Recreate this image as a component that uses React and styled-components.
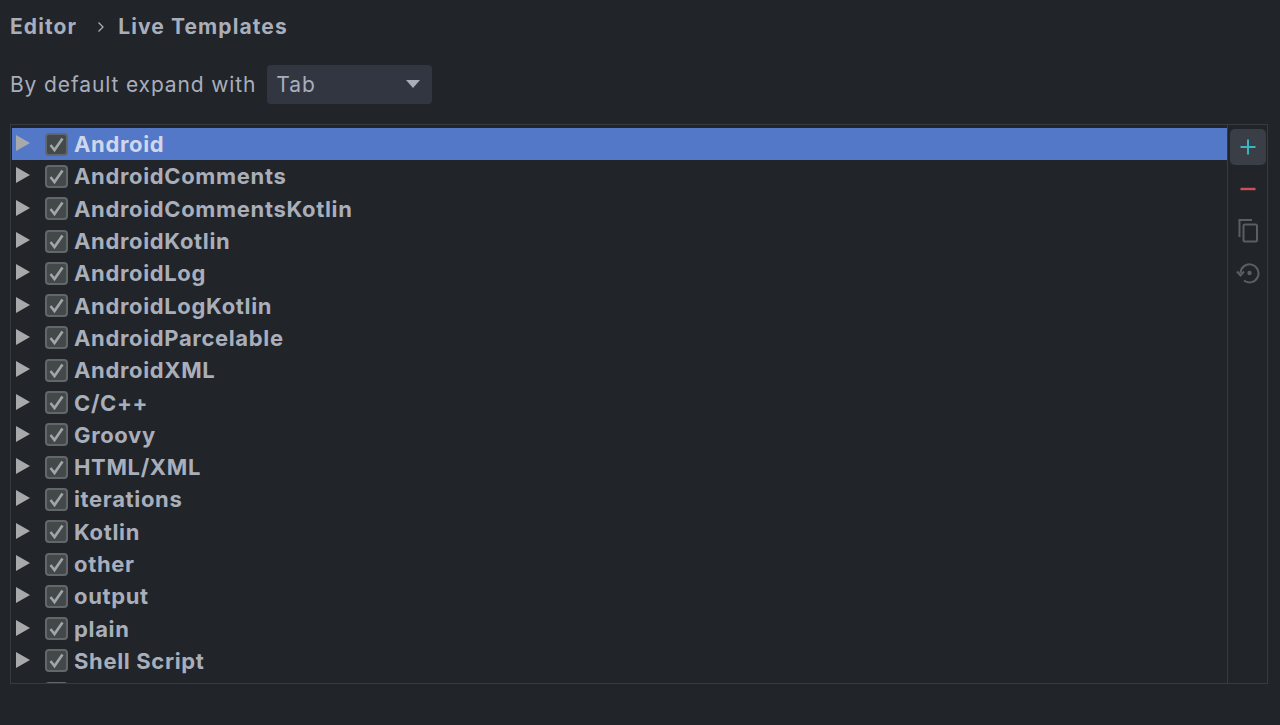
import React from 'react';
import styled, { createGlobalStyle } from 'styled-components';

const GlobalStyle = createGlobalStyle`
  html, body {
    margin: 0;
    height: 100%;
    background: #212429;
  }
  body {
    font-family: Inter, "Liberation Sans", sans-serif;
    overflow: hidden;
  }
`;

const Page = styled.div`
  width: 1280px;
  height: 725px;
  padding: 13px 12px 0 10px;
  box-sizing: border-box;
  display: flex;
  flex-direction: column;
  color: #a9aebb;
`;

const Breadcrumb = styled.div`
  display: flex;
  align-items: center;
  height: 27px;
  font-size: 21px;
  font-weight: 700;
  letter-spacing: 1.1px;
`;

const Chevron = styled.svg`
  width: 8px;
  height: 12px;
  margin: 0 13px 0 20px;
`;

const OptionRow = styled.div`
  display: flex;
  align-items: center;
  gap: 11px;
  margin-top: 24px;
  height: 40px;
  font-size: 21px;
  letter-spacing: 0.87px;
`;

const Select = styled.div`
  width: 165px;
  height: 39px;
  border-radius: 4px;
  background: #323640;
  padding: 0 11px 0 9px;
  box-sizing: border-box;
  display: flex;
  align-items: center;
  justify-content: space-between;
`;

const SelectArrow = styled.div`
  width: 0;
  height: 0;
  border-left: 7px solid transparent;
  border-right: 7px solid transparent;
  border-top: 8px solid #a9aebb;
  margin-right: 1px;
`;

const Panel = styled.div`
  margin-top: 20px;
  height: 560px;
  box-sizing: border-box;
  border: 1px solid #363a41;
  display: flex;
  overflow: hidden;
`;

const TreeList = styled.div`
  flex: 1;
  padding: 3px 0 0 1px;
  overflow: hidden;
`;

const Row = styled.div`
  height: 32.3px;
  display: flex;
  align-items: center;
  background: ${p => (p.$selected ? '#5478c8' : 'transparent')};
  color: ${p => (p.$selected ? '#cfd7ea' : '#a9aebb')};
  font-size: 22px;
  font-weight: 700;
  letter-spacing: 0.65px;
  white-space: nowrap;
`;

const RowLabel = styled.span`
  margin-left: 1px;
`;

const Arrow = styled.div`
  width: 0;
  height: 0;
  margin: -2px 0 0 4px;
  border-top: 8px solid transparent;
  border-bottom: 8px solid transparent;
  border-left: 14px solid #a7a9ab;
`;

const Check = styled.div`
  width: 23px;
  height: 23px;
  margin: 0 5px 0 ${p => (p.$noArrow ? '33px' : '15px')};
  flex: none;
  box-sizing: border-box;
  border: 2px solid #63676a;
  border-radius: 4px;
  background: #43494a;
  display: flex;
  align-items: center;
  justify-content: center;
`;

const Toolbar = styled.div`
  width: 40px;
  flex: none;
  border-left: 1px solid #363a41;
  padding: 4px 2px 0;
  box-sizing: border-box;
  display: flex;
  flex-direction: column;
  align-items: center;
  gap: 6px;
`;

const ToolButton = styled.div`
  width: 36px;
  height: 36px;
  border-radius: 5px;
  display: flex;
  align-items: center;
  justify-content: center;
  background: ${p => (p.$active ? '#3a3e47' : 'transparent')};
`;

const groups = [
  'Android',
  'AndroidComments',
  'AndroidCommentsKotlin',
  'AndroidKotlin',
  'AndroidLog',
  'AndroidLogKotlin',
  'AndroidParcelable',
  'AndroidXML',
  'C/C++',
  'Groovy',
  'HTML/XML',
  'iterations',
  'Kotlin',
  'other',
  'output',
  'plain',
  'Shell Script',
];

function CheckMark() {
  return (
    <svg width="19" height="19" viewBox="0 0 19 19" fill="none">
      <path d="M3.5 10 L7.5 15 L15.5 3.5" stroke="#a3a6a8" strokeWidth="2.6" />
    </svg>
  );
}

function App() {
  return (
    <Page>
      <GlobalStyle />
      <Breadcrumb>
        Editor
        <Chevron viewBox="0 0 8 12" fill="none">
          <path d="M1.5 1.5 L6 6 L1.5 10.5" stroke="#a9aebb" strokeWidth="1.3" />
        </Chevron>
        Live Templates
      </Breadcrumb>
      <OptionRow>
        By default expand with
        <Select>
          Tab
          <SelectArrow />
        </Select>
      </OptionRow>
      <Panel>
        <TreeList>
          {groups.map((name, i) => (
            <Row key={name} $selected={i === 0}>
              <Arrow />
              <Check>
                <CheckMark />
              </Check>
              <RowLabel>{name}</RowLabel>
            </Row>
          ))}
          {/* next row is clipped by the panel, only the checkbox top shows */}
          <Row>
            <Check $noArrow />
          </Row>
        </TreeList>
        <Toolbar>
          <ToolButton $active>
            <svg width="18" height="18" viewBox="0 0 18 18" fill="none">
              <path d="M9 1.5 V16.5 M1.5 9 H16.5" stroke="#3fb3c0" strokeWidth="2" />
            </svg>
          </ToolButton>
          <ToolButton>
            <svg width="18" height="18" viewBox="0 0 18 18" fill="none">
              <path d="M1.5 9 H16.5" stroke="#c9525a" strokeWidth="2.4" />
            </svg>
          </ToolButton>
          <ToolButton>
            <svg width="24" height="26" viewBox="0 0 24 26" fill="none" stroke="#5b5e62" strokeWidth="2">
              <path d="M16 2 H3.5 V19" />
              <rect x="7.5" y="6.5" width="13.5" height="17" rx="1.5" />
            </svg>
          </ToolButton>
          <ToolButton>
            <svg width="24" height="22" viewBox="0 0 24 22" fill="none" stroke="#5b5e62" strokeWidth="2">
              <path d="M4.5 11 A9 9 0 1 1 8 18.5" />
              <path d="M1 9.5 L4.5 13.5 L8 9.5" />
              <circle cx="13.5" cy="11" r="2.2" fill="#5b5e62" stroke="none" />
            </svg>
          </ToolButton>
        </Toolbar>
      </Panel>
    </Page>
  );
}

export default App;
